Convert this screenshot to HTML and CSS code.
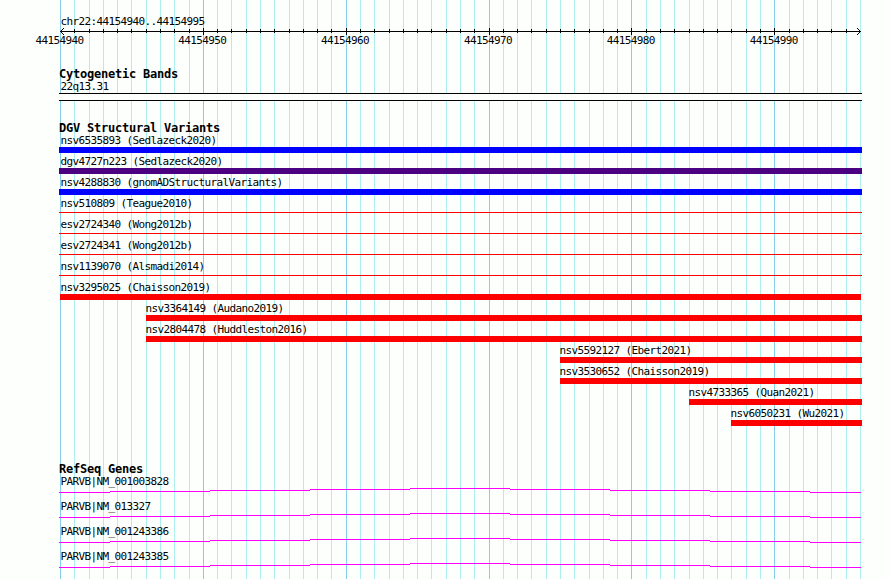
FILE: index.html
```html
<!DOCTYPE html>
<html lang="en">

<head>
    <meta charset="UTF-8">
    <title>chr22:44154940..44154995</title>
    <link rel="stylesheet" href="styles.css">
</head>

<body>
    <div class="browser">
        <!-- vertical grid, one line per base, darker every 10 bases -->
        <svg class="grid" width="890" height="579" shape-rendering="crispEdges">
            <defs>
                <pattern id="bases" x="60" y="0" width="100" height="579" patternUnits="userSpaceOnUse">
                    <path class="minor" d="M0.5 0V579M14.5 0V579M29.5 0V579M43.5 0V579M57.5 0V579M71.5 0V579M86.5 0V579" />
                </pattern>
            </defs>
            <rect x="60" y="0" width="801" height="579" fill="url(#bases)" />
            <path class="major" d="M60.5 0V579M203.5 0V579M346.5 0V579M489.5 0V579M631.5 0V579M774.5 0V579" />
        </svg>

        <div class="track ruler">
            <div class="label">chr22:44154940..44154995</div>
            <svg class="axis" width="803" height="7" shape-rendering="crispEdges">
                <defs>
                    <pattern id="ticks" x="1" y="0" width="100" height="7" patternUnits="userSpaceOnUse">
                        <path class="line" d="M0.5 1V5M14.5 1V5M29.5 1V5M43.5 1V5M57.5 1V5M71.5 1V5M86.5 1V5" />
                    </pattern>
                </defs>
                <rect x="2" y="0" width="799" height="7" fill="url(#ticks)" />
                <path class="line" d="M1 3.5H802M144.5 0V7M287.5 0V7M430.5 0V7M572.5 0V7M715.5 0V7" />
                <path d="M4 0h1v1h-1zM3 1h1v1h-1zM2 2h1v1h-1zM2 4h1v1h-1zM3 5h1v1h-1zM4 6h1v1h-1z" />
                <path d="M798 0h1v1h-1zM799 1h1v1h-1zM800 2h1v1h-1zM800 4h1v1h-1zM799 5h1v1h-1zM798 6h1v1h-1z" />
            </svg>
            <div class="positions">
                <span>44154940</span>
                <span>44154950</span>
                <span>44154960</span>
                <span>44154970</span>
                <span>44154980</span>
                <span>44154990</span>
            </div>
        </div>

        <div class="track bands">
            <h2>Cytogenetic Bands</h2>
            <div class="label">22q13.31</div>
            <div class="band"></div>
        </div>

        <div class="track variants">
            <h2>DGV Structural Variants</h2>
            <div class="feature"><div class="label">nsv6535893 (Sedlazeck2020)</div><div class="bar blue"></div></div>
            <div class="feature"><div class="label">dgv4727n223 (Sedlazeck2020)</div><div class="bar purple"></div></div>
            <div class="feature"><div class="label">nsv4288830 (gnomADStructuralVariants)</div><div class="bar blue"></div></div>
            <div class="feature"><div class="label">nsv510809 (Teague2010)</div><div class="bar thin"></div></div>
            <div class="feature"><div class="label">esv2724340 (Wong2012b)</div><div class="bar thin"></div></div>
            <div class="feature"><div class="label">esv2724341 (Wong2012b)</div><div class="bar thin"></div></div>
            <div class="feature"><div class="label">nsv1139070 (Alsmadi2014)</div><div class="bar thin"></div></div>
            <div class="feature"><div class="label">nsv3295025 (Chaisson2019)</div><div class="bar red exact"></div></div>
            <div class="feature from-946"><div class="label">nsv3364149 (Audano2019)</div><div class="bar red"></div></div>
            <div class="feature from-946"><div class="label">nsv2804478 (Huddleston2016)</div><div class="bar red"></div></div>
            <div class="feature from-975"><div class="label">nsv5592127 (Ebert2021)</div><div class="bar red"></div></div>
            <div class="feature from-975"><div class="label">nsv3530652 (Chaisson2019)</div><div class="bar red"></div></div>
            <div class="feature from-984"><div class="label">nsv4733365 (Quan2021)</div><div class="bar red"></div></div>
            <div class="feature from-987"><div class="label">nsv6050231 (Wu2021)</div><div class="bar red"></div></div>
        </div>

        <div class="track genes">
            <h2>RefSeq Genes</h2>
            <svg class="defs" width="0" height="0">
                <!-- intron drawn as a very flat hat -->
                <symbol id="intron" viewBox="0 0 803 5">
                    <path class="intron" d="M0 4.5H51M51 3.5H151M151 2.5H251M251 1.5H351M351 0.5H451M451 1.5H551M551 2.5H651M651 3.5H751M751 4.5H802" />
                </symbol>
            </svg>
            <div class="gene">
                <div class="label">PARVB|NM_001003828</div>
                <svg width="803" height="5" shape-rendering="crispEdges"><use href="#intron" /></svg>
            </div>
            <div class="gene">
                <div class="label">PARVB|NM_013327</div>
                <svg width="803" height="5" shape-rendering="crispEdges"><use href="#intron" /></svg>
            </div>
            <div class="gene">
                <div class="label">PARVB|NM_001243386</div>
                <svg width="803" height="5" shape-rendering="crispEdges"><use href="#intron" /></svg>
            </div>
            <div class="gene">
                <div class="label">PARVB|NM_001243385</div>
                <svg width="803" height="5" shape-rendering="crispEdges"><use href="#intron" /></svg>
            </div>
        </div>
    </div>
</body>

</html>
```

FILE: styles.css
```css
body {
    margin: 0;
    background-color: #fdfffc;
    color: #000;
    font-family: "DejaVu Sans Mono", monospace;
    font-size: 11px;
    line-height: 13px;
    letter-spacing: -0.62px;
}

.browser {
    position: relative;
    width: 890px;
    height: 579px;
    overflow: hidden;
    display: flex;
    flex-direction: column;
}

/* the grid lies behind all the tracks */
.grid {
    position: absolute;
    top: 0;
    left: 0;
}

.minor {
    stroke: #afeeee;
}

.major {
    stroke: #87ceeb;
}

.line {
    stroke: #000;
}

.track {
    position: relative;
    width: 803px;
    margin-left: 59px;
}

.track svg {
    display: block;
}

h2 {
    margin: 0;
    height: 12px;
    font-size: 12px;
    line-height: 12px;
    letter-spacing: -0.22px;
}

.label {
    height: 13px;
    padding-left: 1.4px;
    white-space: nowrap;
}

/* ruler */
.ruler {
    height: 53px;
    padding-top: 15px;
    box-sizing: border-box;
    flex: 0 0 68px;
}

.positions {
    display: flex;
    margin: -1px 0 0 -23.6px;
}

.positions span {
    flex: 0 0 142.857px;
}

/* cytogenetic bands */
.bands {
    height: 54px;
}

.band {
    height: 6px;
    border-top: 1px solid #000;
    border-bottom: 1px solid #000;
    background-color: #fdfffc;
}

/* structural variants */
.variants {
    height: 341px;
}

.feature {
    height: 21px;
}

.bar {
    height: 6px;
}

.blue {
    background-color: #0000ff;
}

.purple {
    background-color: #4b0082;
}

.red {
    background-color: #ff0000;
}

.thin {
    height: 1px;
    border-top: 2px solid transparent;
    background-color: #ff0000;
    background-clip: padding-box;
}

.exact {
    margin: 0 1px;
}

.from-946 {
    margin-left: 87px;
}

.from-975 {
    margin-left: 501px;
}

.from-984 {
    margin-left: 630px;
}

.from-987 {
    margin-left: 672px;
}

.from-946 .label,
.from-975 .label,
.from-984 .label,
.from-987 .label {
    padding-left: 0;
    margin-left: -0.5px;
}

/* genes */
.gene {
    height: 25px;
}

.intron {
    stroke: #ff00ff;
}
```
